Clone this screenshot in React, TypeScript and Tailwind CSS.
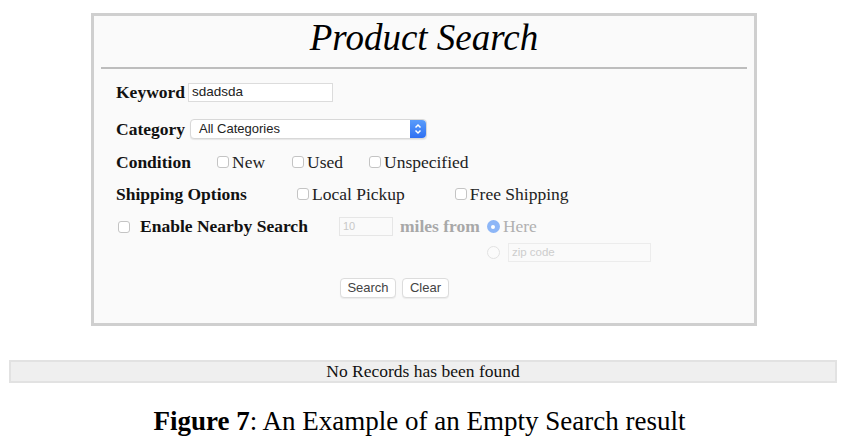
import React from "react";

const serif = "font-['Liberation_Serif','Times_New_Roman',serif]";
const sans = "font-['Liberation_Sans',Arial,sans-serif]";

const Box = ({ className = "" }: { className?: string }) => (
  <span
    className={`inline-block w-[12px] h-[12px] rounded-[3px] border border-[#c4c4c4] bg-white shrink-0 ${className}`}
  />
);

const Check = ({ label, className = "" }: { label: string; className?: string }) => (
  <span className={`flex items-center ${className}`}>
    <Box />
    <span className="ml-[3px] text-[17.5px] text-[#222]">{label}</span>
  </span>
);

const Stepper = () => (
  <span className="flex items-center justify-center w-[16px] h-[18px] rounded-r-[4px] bg-gradient-to-b from-[#5a9cfb] to-[#2f6ff2]">
    <svg width="8" height="12" viewBox="0 0 8 12" fill="none" stroke="white" strokeWidth="1.5">
      <path d="M1.5 4.5 L4 2 L6.5 4.5" />
      <path d="M1.5 7.5 L4 10 L6.5 7.5" />
    </svg>
  </span>
);

export default function App() {
  return (
    <div className={`w-[854px] h-[446px] bg-white overflow-hidden pt-[13px] ${serif}`}>
      {/* search form panel */}
      <div className="ml-[91px] w-[666px] h-[313px] border-[3px] border-[#cfcfcf] bg-[#fafafa]">
        <h1 className="pt-[2px] text-center text-[37px] leading-[40px] italic text-black">
          Product Search
        </h1>
        <div className="mx-[7px] mt-[9px] border-t-2 border-[#bdbdbd]" />

        <div className="pl-[22px] text-[#111]">
          <div className="flex items-center mt-[14px] h-[19px]">
            <span className="w-[72px] font-bold text-[17.5px]">Keyword</span>
            <span
              className={`flex items-center w-[145px] h-[19px] border border-[#dcdcdc] bg-white pl-[3px] text-[13.5px] text-[#222] ${sans}`}
            >
              sdadsda
            </span>
          </div>

          <div className="flex items-center mt-[17px] h-[20px]">
            <span className="w-[74px] font-bold text-[17.5px]">Category</span>
            <span
              className={`flex items-center justify-between w-[237px] h-[20px] rounded-[4px] border border-[#d8d8d8] bg-white shadow-[0_1px_1px_rgba(0,0,0,0.08)] text-[13px] text-[#222] ${sans}`}
            >
              <span className="pl-[8px]">All Categories</span>
              <Stepper />
            </span>
          </div>

          <div className="flex items-center mt-[13px] h-[20px]">
            <span className="w-[101px] font-bold text-[17.5px]">Condition</span>
            <Check label="New" />
            <Check label="Used" className="ml-[27px]" />
            <Check label="Unspecified" className="ml-[26px]" />
          </div>

          <div className="flex items-center mt-[12px] h-[20px]">
            <span className="w-[181px] font-bold text-[17.5px]">Shipping Options</span>
            <Check label="Local Pickup" />
            <Check label="Free Shipping" className="ml-[50px]" />
          </div>

          <div className="flex items-start mt-[13px]">
            <div className="flex items-center h-[19px] w-[223px]">
              <Box className="ml-[2px]" />
              <span className="ml-[10px] font-bold text-[17.5px]">Enable Nearby Search</span>
            </div>
            <span
              className={`flex items-center w-[54px] h-[19px] border border-[#e6e6e6] bg-[#fafafa] pl-[3px] text-[11px] text-[#c8c8c8] ${sans}`}
            >
              10
            </span>
            <span className="flex items-center h-[19px] ml-[7px] font-bold text-[17.5px] text-[#a8a8a8]">
              miles from
            </span>
            <div className="ml-[7px] flex flex-col gap-[7px]">
              <div className="flex items-center h-[19px]">
                <span className="flex items-center justify-center w-[13px] h-[13px] rounded-full bg-[#8db6f7]">
                  <span className="w-[4px] h-[4px] rounded-full bg-white" />
                </span>
                <span className="ml-[3px] text-[17.5px] text-[#b0b0b0]">Here</span>
              </div>
              <div className="flex items-center h-[19px]">
                <span className="w-[13px] h-[13px] rounded-full border border-[#e2e2e2] bg-[#fbfbfb]" />
                <span
                  className={`flex items-center ml-[8px] w-[143px] h-[19px] border border-[#ececec] bg-[#fafafa] pl-[3px] text-[11.5px] text-[#cdcdcd] ${sans}`}
                >
                  zip code
                </span>
              </div>
            </div>
          </div>
        </div>

        <div className={`flex gap-[6px] mt-[16px] ml-[246px] text-[13px] text-[#444] ${sans}`}>
          <span className="flex items-center justify-center w-[56px] h-[20px] rounded-[4px] border border-[#dcdcdc] bg-white shadow-[0_1px_1px_rgba(0,0,0,0.06)]">
            Search
          </span>
          <span className="flex items-center justify-center w-[47px] h-[20px] rounded-[4px] border border-[#dcdcdc] bg-white shadow-[0_1px_1px_rgba(0,0,0,0.06)]">
            Clear
          </span>
        </div>
      </div>

      {/* empty result bar */}
      <div className="ml-[9px] mt-[34px] w-[828px] h-[23px] flex items-center justify-center border-2 border-[#e2e2e2] bg-[#efefef] text-[17.5px] text-[#111]">
        No Records has been found
      </div>

      <p className="mt-[23px] text-center pr-[15px] text-[27px] leading-[30px] text-black">
        <span className="font-bold">Figure 7</span>: An Example of an Empty Search result
      </p>
    </div>
  );
}
